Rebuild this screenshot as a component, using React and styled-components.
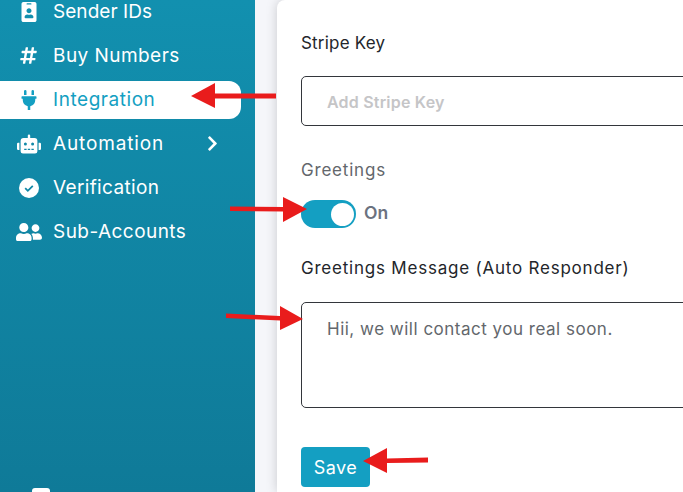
import styled, { createGlobalStyle } from 'styled-components';
import { FaIdBadge, FaHashtag, FaPlug, FaRobot, FaUserFriends, FaChevronRight } from 'react-icons/fa';

const GlobalStyle = createGlobalStyle`
  html, body {
    margin: 0;
    padding: 0;
    height: 100%;
    overflow: hidden;
    font-family: Inter, "Liberation Sans", sans-serif;
  }
  * { box-sizing: border-box; }
`;

const Page = styled.div`
  position: relative;
  display: flex;
  width: 683px;
  height: 492px;
  overflow: hidden;
  background: #f5f6fa;
`;

const Sidebar = styled.aside`
  display: flex;
  flex-direction: column;
  flex: 0 0 255px;
  height: 100%;
  background: linear-gradient(180deg, #1290af 0%, #0f7a98 100%);
`;

const Nav = styled.nav`
  display: flex;
  flex-direction: column;
  gap: 6px;
  width: 241px;
  margin-top: -7px;
`;

const NavItem = styled.a`
  display: flex;
  align-items: center;
  height: 38px;
  padding-left: 15px;
  padding-bottom: 1px;
  border-radius: 0 12px 12px 0;
  font-size: 19px;
  letter-spacing: ${(p) => p.$spacing ?? 0.45}px;
  color: ${(p) => (p.$active ? '#149fc2' : '#fff')};
  background: ${(p) => (p.$active ? '#fff' : 'transparent')};
`;

const NavIcon = styled.span`
  display: flex;
  justify-content: center;
  align-items: center;
  width: 27px;
  margin-right: 11px;
  font-size: ${(p) => p.$size || 20}px;
`;

const Chevron = styled.span`
  display: flex;
  margin-left: auto;
  margin-right: 20px;
  font-size: 17px;
`;

const SideFoot = styled.div`
  width: 18px;
  height: 4px;
  margin: auto 0 0 32px;
  border-radius: 3px 3px 0 0;
  background: #fff;
`;

const Card = styled.main`
  flex: 1;
  margin-left: 22px;
  padding: 31px 0 0 24px;
  overflow: hidden;
  background: #fff;
  border-top-left-radius: 8px;
  box-shadow: 0 0 12px rgba(0, 0, 0, 0.18);
`;

const Label = styled.div`
  height: 24px;
  line-height: 24px;
  font-size: 17px;
  letter-spacing: ${(p) => p.$spacing || 0.2}px;
  color: ${(p) => (p.$muted ? '#63676c' : '#23262b')};
  margin-top: ${(p) => p.$top || 0}px;
  margin-bottom: ${(p) => p.$gap || 21}px;
`;

const TextInput = styled.div`
  width: 500px;
  height: 50px;
  padding: 2px 0 0 25px;
  display: flex;
  align-items: center;
  border: 1px solid #33363b;
  border-radius: 5px;
  font-size: 16px;
  font-weight: 600;
  letter-spacing: 0.2px;
  color: #c5c5c7;
`;

const TextArea = styled.div`
  width: 500px;
  height: 106px;
  padding: 14px 25px;
  border: 1px solid #33363b;
  border-radius: 5px;
  font-size: 17px;
  letter-spacing: 0.5px;
  line-height: 24px;
  color: #63676c;
`;

const ToggleRow = styled.div`
  display: flex;
  align-items: center;
  gap: 8px;
  height: 28px;
  margin-bottom: 28px;
`;

const Toggle = styled.div`
  display: flex;
  justify-content: flex-end;
  align-items: center;
  width: 55px;
  height: 28px;
  padding-right: 2px;
  border-radius: 14px;
  background: #149fc2;
`;

const Knob = styled.div`
  width: 23px;
  height: 23px;
  border-radius: 50%;
  background: #fff;
`;

const ToggleText = styled.span`
  padding-bottom: 3px;
  font-size: 17.5px;
  font-weight: 600;
  color: #6b7280;
`;

const SaveButton = styled.button`
  display: block;
  width: 69px;
  height: 40px;
  margin-top: 39px;
  border: 0;
  border-radius: 4px;
  background: #149fc2;
  color: #fff;
  font-family: inherit;
  font-size: 18px;
  font-weight: 400;
  letter-spacing: 0.4px;
`;

const Arrows = styled.svg`
  position: absolute;
  top: 0;
  left: 0;
  pointer-events: none;
`;

const CheckCircle = () => (
  <svg width="20" height="20" viewBox="0 0 20 20">
    <circle cx="10" cy="10" r="10" fill="#fff" />
    <path d="M6.2 10.2l2.6 2.6 5-5" fill="none" stroke="#1187a6" strokeWidth="1.8" />
  </svg>
);

export default function App() {
  return (
    <Page>
      <GlobalStyle />
      <Sidebar>
        <Nav>
          <NavItem $spacing={0.05}><NavIcon $size={20}><FaIdBadge /></NavIcon>Sender IDs</NavItem>
          <NavItem><NavIcon $size={19}><FaHashtag /></NavIcon>Buy Numbers</NavItem>
          <NavItem $active $spacing={0.55}><NavIcon $size={20}><FaPlug /></NavIcon>Integration</NavItem>
          <NavItem $spacing={0.85}>
            <NavIcon $size={24}><FaRobot /></NavIcon>Automation
            <Chevron><FaChevronRight /></Chevron>
          </NavItem>
          <NavItem $spacing={0.35}><NavIcon><CheckCircle /></NavIcon>Verification</NavItem>
          <NavItem><NavIcon $size={26}><FaUserFriends /></NavIcon>Sub-Accounts</NavItem>
        </Nav>
        <SideFoot />
      </Sidebar>
      <Card>
        <Label>Stripe Key</Label>
        <TextInput>Add Stripe Key</TextInput>
        <Label $muted $top={32} $gap={18} $spacing={0.8}>Greetings</Label>
        <ToggleRow>
          <Toggle><Knob /></Toggle>
          <ToggleText>On</ToggleText>
        </ToggleRow>
        <Label $spacing={0.78} $gap={22}>Greetings Message (Auto Responder)</Label>
        <TextArea>Hii, we will contact you real soon.</TextArea>
        <SaveButton>Save</SaveButton>
      </Card>
      <Arrows width="683" height="492" viewBox="0 0 683 492">
        <g fill="#e91c1c">
          <polygon points="191,96 215,83 215,93.5 276,93.5 276,98.5 215,98.5 215,108" />
          <polygon points="307,209 283,197 283,207 230,206.500 230,211 283,211.500 283,222" />
          <polygon points="303,319 280,306 280,316 226,313.500 226,318 280,320.500 280,330" />
          <polygon points="363,461 387,448 387,458.500 428,457.500 428,462.500 387,463 387,473" />
        </g>
      </Arrows>
    </Page>
  );
}
